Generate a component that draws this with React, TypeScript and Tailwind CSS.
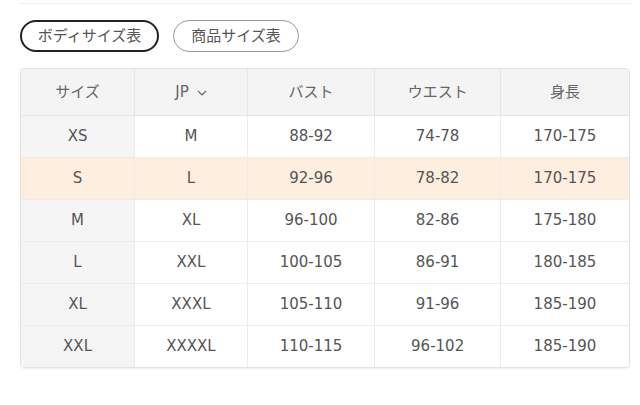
import React from "react";

const rows = [
  ["XS", "M", "88-92", "74-78", "170-175"],
  ["S", "L", "92-96", "78-82", "170-175"],
  ["M", "XL", "96-100", "82-86", "175-180"],
  ["L", "XXL", "100-105", "86-91", "180-185"],
  ["XL", "XXXL", "105-110", "91-96", "185-190"],
  ["XXL", "XXXXL", "110-115", "96-102", "185-190"],
];

const widths = ["w-[114px]", "w-[113px]", "w-[128px]", "w-[126px]", "w-[129px]"];

function Chevron() {
  return (
    <svg width="10" height="6" viewBox="0 0 10 6" className="ml-[8px] mt-[2px]">
      <path d="M1 1 L5 5 L9 1" fill="none" stroke="#666" strokeWidth="1.2" />
    </svg>
  );
}

export default function App() {
  return (
    <div
      className="w-[640px] h-[405px] bg-white pt-[3px] pl-[20px] pr-[8px] text-[#555]"
      style={{ fontFamily: '"DejaVu Sans", "Noto Sans CJK JP", sans-serif' }}
    >
      <div className="h-px bg-[#eeeeee]" />

      <div className="flex gap-[14px] mt-[16px]">
        <button className="h-[32px] w-[139px] rounded-full border-2 border-[#222] text-[15px] text-[#555] flex items-center justify-center">
          ボディサイズ表
        </button>
        <button className="h-[32px] w-[126px] rounded-full border border-[#999] text-[15px] text-[#555] flex items-center justify-center">
          商品サイズ表
        </button>
      </div>

      <div className="mt-[16px] w-[610px] border border-[#e2e2e2] rounded-[4px] overflow-hidden shadow-[0_1px_2px_rgba(0,0,0,0.06)]">
        <table className="w-full border-collapse text-[15px]">
          <thead>
            <tr className="h-[46px] bg-[#f4f4f4]">
              {["サイズ", "JP", "バスト", "ウエスト", "身長"].map((h, i) => (
                <th
                  key={h}
                  className={`${widths[i]} font-normal text-[#666] p-0 border-l border-b border-[#e6e6e6] first:border-l-0`}
                >
                  <span className="inline-flex items-center">
                    {h}
                    {h === "JP" && <Chevron />}
                  </span>
                </th>
              ))}
            </tr>
          </thead>
          <tbody>
            {rows.map((r, ri) => (
              <tr key={ri} className={`h-[42px] ${ri === 1 ? "bg-[#fdeedf]" : "bg-white"}`}>
                {r.map((c, ci) => (
                  <td
                    key={ci}
                    className={`text-center p-0 border-l border-[#ececec] first:border-l-0 ${
                      ri < rows.length - 1 ? "border-b" : ""
                    } ${ci === 0 && ri !== 1 ? "bg-[#f5f5f5]" : ""}`}
                  >
                    {c}
                  </td>
                ))}
              </tr>
            ))}
          </tbody>
        </table>
      </div>
    </div>
  );
}
